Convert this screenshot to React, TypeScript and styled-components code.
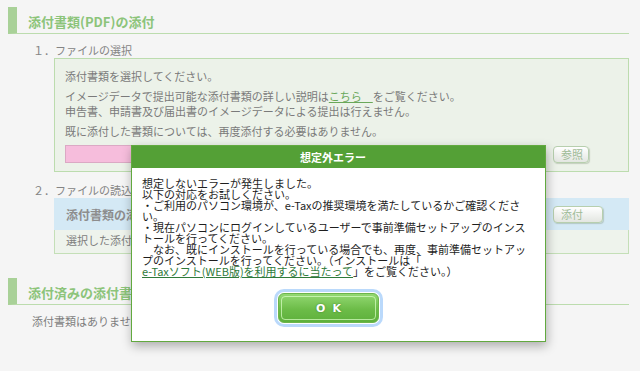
import React from "react";
import styled, { createGlobalStyle } from "styled-components";

const Global = createGlobalStyle`
  html, body { margin: 0; padding: 0; background: #f5f5f5; }
  body { font-family: "Noto Sans CJK JP", "Noto Sans", sans-serif; }
  * { box-sizing: border-box; }
`;

const Page = styled.div`
  position: relative;
  width: 640px;
  height: 371px;
  padding: 7px 11px 0 8px;
  overflow: hidden;
  color: #7d7d7d;
  font-size: 11px;
`;

const SectionHeading = styled.h2<{ $top?: number }>`
  margin: ${(p) => p.$top ?? 0}px 0 0 0;
  height: 27px;
  border-left: 9px solid #a9d198;
  border-bottom: 1px solid #bcdcae;
  padding: 5px 0 0 11px;
  font-size: 13px;
  line-height: 20px;
  font-weight: bold;
  color: #8cc47a;
`;

const StepLabel = styled.div<{ $top: number }>`
  margin: ${(p) => p.$top}px 0 0 25px;
  line-height: 16px;
  font-size: 11px;
  color: #848484;
`;

const Box = styled.div`
  margin-left: 46px;
  background: #ecf2e9;
  border: 1px solid #bcdcae;
  padding: 10px 10px 8px 10px;
`;

const Para = styled.p`
  margin: 0 0 5px 0;
  line-height: 15px;
  color: #7a7a7a;
  white-space: nowrap;
`;

const Link = styled.span`
  color: #6aa85a;
  text-decoration: underline;
`;

const InputRow = styled.div`
  display: flex;
  align-items: center;
  gap: 8px;
  margin-top: 6px;
`;

const PinkInput = styled.div`
  width: 480px;
  height: 18px;
  background: #f6bddc;
  border: 1px solid #dba9c4;
`;

const SmallButton = styled.div<{ $w: number }>`
  width: ${(p) => p.$w}px;
  height: 17px;
  border: 1px solid #b7cfae;
  border-radius: 4px;
  background: linear-gradient(#ffffff, #e3e6e1);
  box-shadow: 1px 1px 1px rgba(120, 140, 110, 0.35);
  color: #9fbb97;
  font-size: 11px;
  line-height: 15px;
  padding-left: 7px;
`;

const BlueRow = styled.div`
  margin-left: 46px;
  height: 32px;
  background: #d4e9f5;
  display: flex;
  align-items: center;
  padding: 0 26px 0 12px;
`;

const BlueTitle = styled.div`
  flex: 1;
  font-weight: bold;
  font-size: 12px;
  color: #8d8d8d;
`;

const SelectedRow = styled.div`
  margin-left: 46px;
  height: 24px;
  background: #eef3ec;
  border: 1px solid #c4dfb7;
  border-top: none;
  padding: 0 0 0 11px;
  line-height: 20px;
  color: #7d7d7d;
`;

const NoneText = styled.div`
  margin: 8px 0 0 24px;
  line-height: 16px;
  color: #7d7d7d;
`;

const Dialog = styled.div`
  position: absolute;
  left: 131px;
  top: 145px;
  width: 415px;
  height: 197px;
  background: #ffffff;
  border: 1px solid #62a93f;
  box-shadow: 1px 4px 10px rgba(0, 0, 0, 0.3);
  display: flex;
  flex-direction: column;
`;

const DialogHeader = styled.div`
  height: 22px;
  background: #54a036;
  color: #ffffff;
  font-weight: bold;
  font-size: 11px;
  display: flex;
  align-items: center;
  justify-content: center;
  padding-right: 11px;
`;

const DialogBody = styled.div`
  padding: 10px 10px 0 10px;
  color: #1e1e1e;
  font-size: 11px;
  line-height: 11px;
`;

const Line = styled.span`
  display: block;
  white-space: nowrap;
`;

const DialogLink = styled.span`
  color: #2f7a3a;
  text-decoration: underline;
`;

const Footer = styled.div`
  display: flex;
  justify-content: center;
  padding: 16px 20px 0 0;
`;

const OkButton = styled.div`
  position: relative;
  width: 101px;
  height: 30px;
  border-radius: 6px;
  border: 1px solid #6cb54b;
  background: linear-gradient(#93d872, #6cbc48 55%, #5eb03c);
  box-shadow: 0 0 0 1px #ffffff, 0 0 0 4px #bad9fb;
  display: flex;
  align-items: center;
  justify-content: center;
  color: #ffffff;
  font-family: "DejaVu Sans", sans-serif;
  font-weight: bold;
  font-size: 11px;
  letter-spacing: 7px;
  padding-left: 7px;
  text-shadow: 0 0 2px #3d7d2a;
  &::before {
    content: "";
    position: absolute;
    inset: 2px;
    border-radius: 4px;
    border: 1px solid rgba(220, 255, 200, 0.7);
  }
`;

export default function App() {
  return (
    <>
      <Global />
      <Page>
        <SectionHeading>添付書類(PDF)の添付</SectionHeading>
        <StepLabel $top={8}>１．ファイルの選択</StepLabel>
        <Box>
          <Para>添付書類を選択してください。</Para>
          <Para>
            イメージデータで提出可能な添付書類の詳しい説明は<Link>こちら　</Link>をご覧ください。
            <br />
            申告書、申請書及び届出書のイメージデータによる提出は行えません。
          </Para>
          <Para>既に添付した書類については、再度添付する必要はありません。</Para>
          <InputRow>
            <PinkInput />
            <SmallButton $w={36}>参照</SmallButton>
          </InputRow>
        </Box>
        <StepLabel $top={10}>２．ファイルの読込</StepLabel>
        <BlueRow>
          <BlueTitle>添付書類の添付</BlueTitle>
          <SmallButton $w={50}>添付</SmallButton>
        </BlueRow>
        <SelectedRow>選択した添付書類</SelectedRow>
        <SectionHeading $top={24}>添付済みの添付書類</SectionHeading>
        <NoneText>添付書類はありません。</NoneText>

        <Dialog>
          <DialogHeader>想定外エラー</DialogHeader>
          <DialogBody>
            <Line>想定しないエラーが発生しました。</Line>
            <Line>以下の対応をお試しください。</Line>
            <Line>・ご利用のパソコン環境が、e-Taxの推奨環境を満たしているかご確認くださ</Line>
            <Line>い。</Line>
            <Line>・現在パソコンにログインしているユーザーで事前準備セットアップのインス</Line>
            <Line>トールを行ってください。</Line>
            <Line>　なお、既にインストールを行っている場合でも、再度、事前準備セットアッ</Line>
            <Line>プのインストールを行ってください。（インストールは「</Line>
            <Line>
              <DialogLink>e-Taxソフト(WEB版)を利用するに当たって</DialogLink>」をご覧ください。）
            </Line>
          </DialogBody>
          <Footer>
            <OkButton>OK</OkButton>
          </Footer>
        </Dialog>
      </Page>
    </>
  );
}
